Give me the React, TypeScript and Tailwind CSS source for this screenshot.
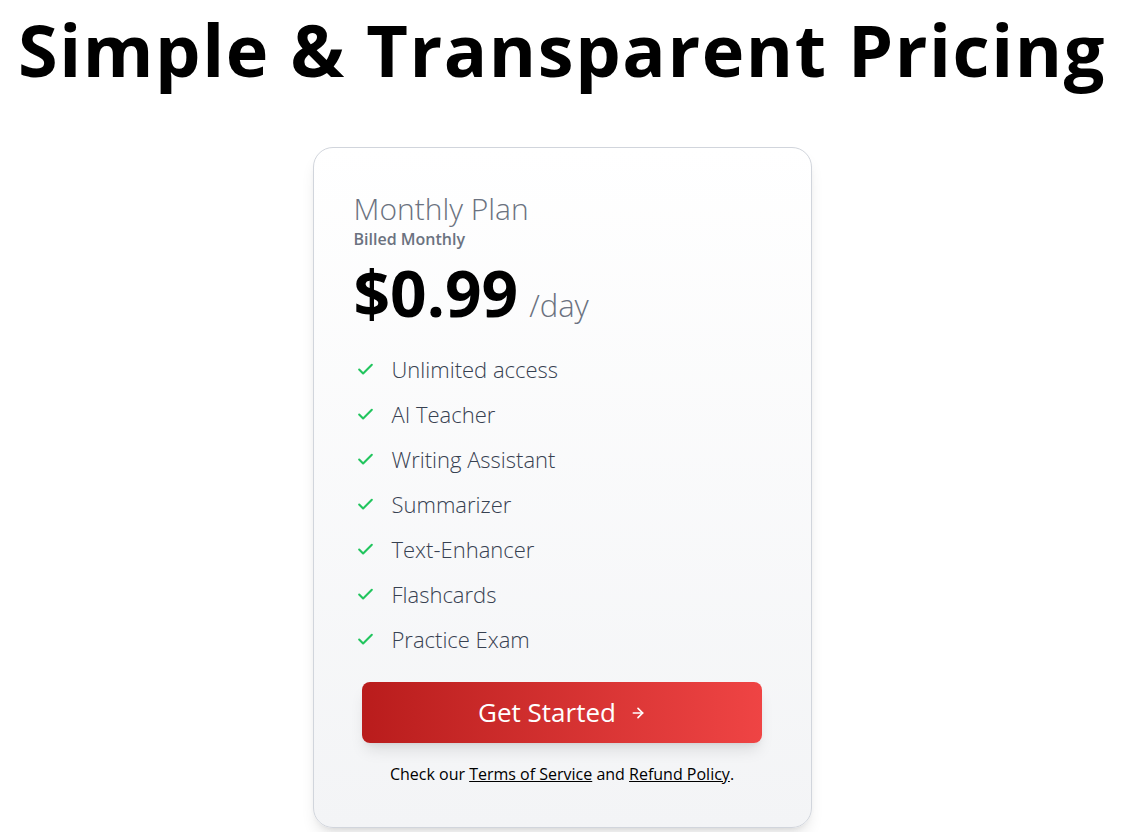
import { Check, ArrowRight } from "lucide-react"

const features = [
  "Unlimited access",
  "AI Teacher",
  "Writing Assistant",
  "Summarizer",
  "Text-Enhancer",
  "Flashcards",
  "Practice Exam",
]

const App = () => {
  return (
    <div className="min-h-screen bg-white pr-[17px] font-['Segoe_UI','Open_Sans','Noto_Sans',sans-serif]">
      <div className="flex flex-col items-center">
        <h1 className="whitespace-nowrap text-[72px] font-bold leading-[98px] text-black tracking-[1.6px]">
          Simple &amp; Transparent Pricing
        </h1>

        <div className="mt-[49px] w-[499px] rounded-[20px] border border-gray-300 bg-gradient-to-b from-white to-[#f3f4f6] px-10 pt-[43px] pb-[41px] shadow-lg">
          <h2 className="text-[30px] font-light leading-9 text-[#6b7280]">Monthly Plan</h2>
          <p className="mt-[2px] text-base font-semibold leading-5 text-[#6b7280]">Billed Monthly</p>

          <div className="mt-[6px] flex items-baseline gap-[11px]">
            <span className="text-[64px] font-bold leading-[88px] -my-[6px] text-black">$0.99</span>
            <span className="text-[31px] font-light text-[#6b7280]">/day</span>
          </div>

          <ul className="mt-[16px] flex flex-col">
            {features.map((f) => (
              <li key={f} className="flex h-[45px] items-center gap-[17px]">
                <Check className="ml-[2px] h-[19px] w-[19px] text-[#22c55e]" strokeWidth={2.6} />
                <span className="text-[22px] font-light text-[#374151]">{f}</span>
              </li>
            ))}
          </ul>

          <button
            type="button"
            className="mx-auto mt-[20px] flex h-[61px] w-[400px] items-center justify-center gap-[14px] rounded-lg bg-gradient-to-r from-[#b91c1c] to-[#ef4444] text-[26px] text-white shadow-lg"
          >
            Get Started
            <ArrowRight className="h-4 w-4" strokeWidth={2.5} />
          </button>

          <p className="mt-[19px] text-center text-base text-black">
            Check our <a className="underline">Terms of Service</a> and{" "}
            <a className="underline">Refund Policy</a>.
          </p>
        </div>
      </div>
    </div>
  )
}

export default App
